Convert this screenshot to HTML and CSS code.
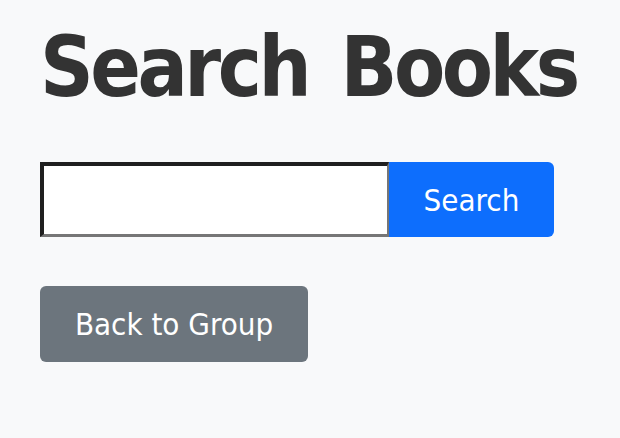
FILE: index.html
```html
<!DOCTYPE html>
<html>
<head>
<meta charset="utf-8">
<link rel="stylesheet" href="styles.css">
</head>
<body>
<main class="page">
  <h1 class="title">Search Books</h1>
  <form class="search-form">
    <input class="search-input" type="text">
    <button class="search-btn" type="button">Search</button>
  </form>
  <button class="back-btn" type="button">Back to Group</button>
</main>
</body>
</html>
```
FILE: styles.css
```css
html, body {
  margin: 0;
  padding: 0;
  background: #f8f9fa;
}
.page {
  padding: 26px 40px 0 40px;
  font-family: "DejaVu Sans Condensed", "DejaVu Sans", sans-serif;
  font-stretch: condensed;
  display: flex;
  flex-direction: column;
  align-items: flex-start;
}
.title {
  margin: 0;
  font-size: 83px;
  line-height: 84px;
  letter-spacing: -3.5px;
  word-spacing: 10px;
  white-space: nowrap;
  font-weight: bold;
  color: #333333;
}
.search-form {
  margin-top: 52px;
  display: flex;
  height: 75px;
}
.search-input {
  box-sizing: border-box;
  width: 349px;
  height: 75px;
  margin: 0;
  background: #fff;
  border-style: solid;
  border-width: 4px 2px 3px 4px;
  border-color: #1f1f1f #767676 #767676 #1f1f1f;
  outline: none;
}
.search-btn {
  box-sizing: border-box;
  width: 165px;
  height: 75px;
  margin: 0;
  border: none;
  border-radius: 0 6px 6px 0;
  background: #0d6efd;
  color: #fff;
  font-family: inherit;
  font-stretch: condensed;
  font-size: 31px;
  padding: 0;
}
.back-btn {
  margin-top: 49px;
  box-sizing: border-box;
  width: 268px;
  height: 76px;
  border: none;
  border-radius: 6px;
  background: #6c757d;
  color: #fff;
  font-family: inherit;
  font-stretch: condensed;
  font-size: 31px;
  padding: 0;
}
```
